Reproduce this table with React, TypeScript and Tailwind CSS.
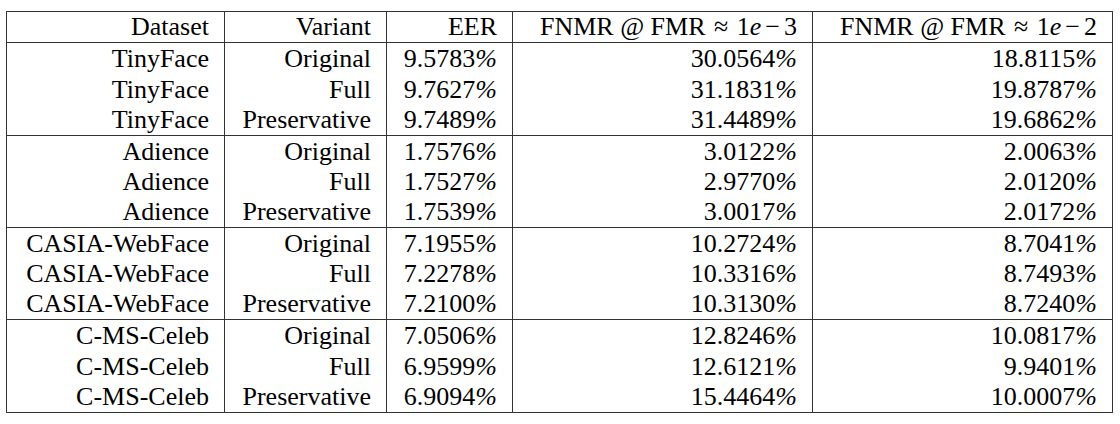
const groups = [
  {
    dataset: 'TinyFace',
    rows: [
      ['Original', '9.5783', '30.0564', '18.8115'],
      ['Full', '9.7627', '31.1831', '19.8787'],
      ['Preservative', '9.7489', '31.4489', '19.6862'],
    ],
    heights: ['h-[31px]', 'h-[31px]', 'h-[30px]'],
  },
  {
    dataset: 'Adience',
    rows: [
      ['Original', '1.7576', '3.0122', '2.0063'],
      ['Full', '1.7527', '2.9770', '2.0120'],
      ['Preservative', '1.7539', '3.0017', '2.0172'],
    ],
    heights: ['h-[31px]', 'h-[30px]', 'h-[30px]'],
  },
  {
    dataset: 'CASIA-WebFace',
    rows: [
      ['Original', '7.1955', '10.2724', '8.7041'],
      ['Full', '7.2278', '10.3316', '8.7493'],
      ['Preservative', '7.2100', '10.3130', '8.7240'],
    ],
    heights: ['h-[31px]', 'h-[30px]', 'h-[30px]'],
  },
  {
    dataset: 'C-MS-Celeb',
    rows: [
      ['Original', '7.0506', '12.8246', '10.0817'],
      ['Full', '6.9599', '12.6121', '9.9401'],
      ['Preservative', '6.9094', '15.4464', '10.0007'],
    ],
    heights: ['h-[31px]', 'h-[31px]', 'h-[30px]'],
  },
]

const cell = 'flex items-center justify-end pr-[15px] whitespace-nowrap'
const line = 'border-r border-[#333]'

function Pct({ value }: { value: string }) {
  return (
    <span>
      {value}
      <i>%</i>
    </span>
  )
}

function FnmrHead({ exp }: { exp: string }) {
  return (
    <span>
      FNMR @ FMR <span className="mx-[2px]">≈</span> 1<i>e</i>
      <span className="mx-[4px]">−</span>
      {exp}
    </span>
  )
}

export default function App() {
  return (
    <div className="w-[1120px] h-[424px] bg-white pt-[11px] pl-[6px] font-['Liberation_Serif'] text-[26px] leading-[30px] text-black">
      <div className="w-[1107px] border border-[#333]">
        <div className="grid grid-cols-[218px_162px_126px_300px_299px] h-[31px] border-b border-[#333]">
          <div className={`${cell} ${line}`}>Dataset</div>
          <div className={`${cell} ${line}`}>Variant</div>
          <div className={`${cell} ${line}`}>EER</div>
          <div className={`${cell} ${line}`}>
            <FnmrHead exp="3" />
          </div>
          <div className={cell}>
            <FnmrHead exp="2" />
          </div>
        </div>

        {groups.map((group, gi) => (
          <div
            key={group.dataset}
            className={gi < groups.length - 1 ? 'border-b border-[#333]' : ''}
          >
            {group.rows.map((row, ri) => (
              <div
                key={row[0]}
                className={`grid grid-cols-[218px_162px_126px_300px_299px] ${group.heights[ri]}`}
              >
                <div className={`${cell} ${line}`}>{group.dataset}</div>
                <div className={`${cell} ${line}`}>{row[0]}</div>
                <div className={`${cell} ${line}`}>
                  <Pct value={row[1]} />
                </div>
                <div className={`${cell} ${line}`}>
                  <Pct value={row[2]} />
                </div>
                <div className={cell}>
                  <Pct value={row[3]} />
                </div>
              </div>
            ))}
          </div>
        ))}
      </div>
    </div>
  )
}
